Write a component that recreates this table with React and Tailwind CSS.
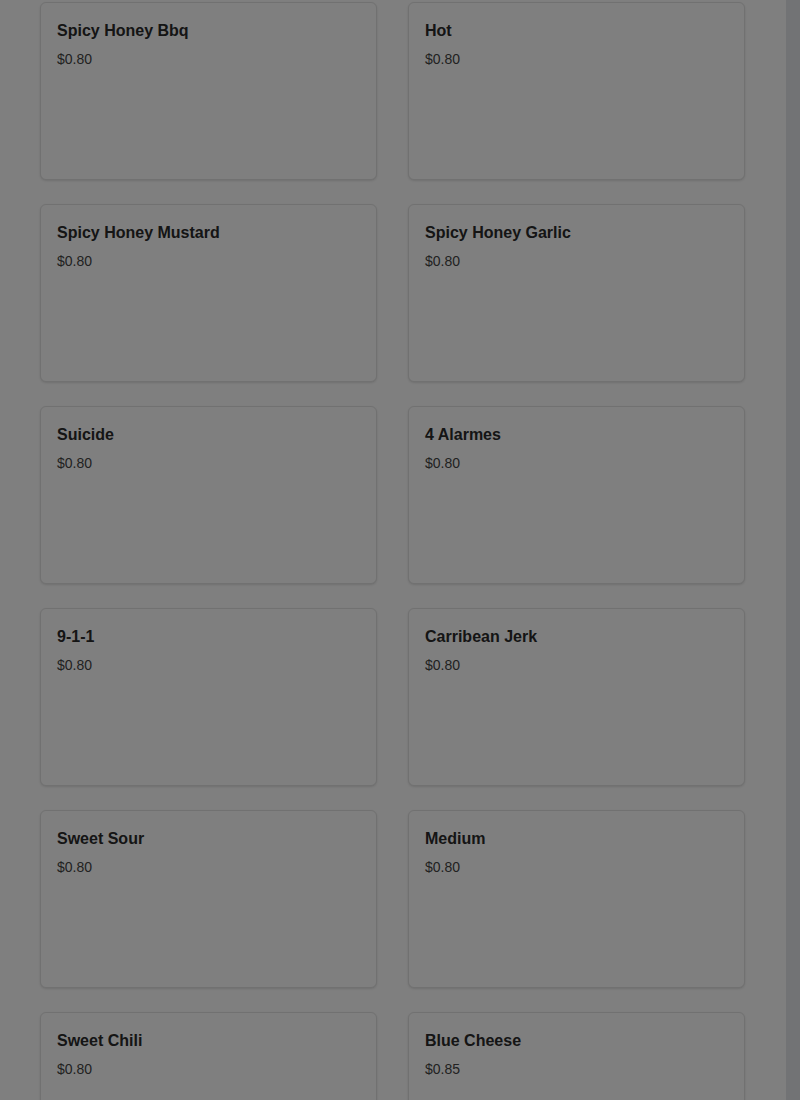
import React from 'react';

const sauces = [
  { name: 'Spicy Honey Bbq', price: '$0.80' },
  { name: 'Hot', price: '$0.80' },
  { name: 'Spicy Honey Mustard', price: '$0.80' },
  { name: 'Spicy Honey Garlic', price: '$0.80' },
  { name: 'Suicide', price: '$0.80' },
  { name: '4 Alarmes', price: '$0.80' },
  { name: '9-1-1', price: '$0.80' },
  { name: 'Carribean Jerk', price: '$0.80' },
  { name: 'Sweet Sour', price: '$0.80' },
  { name: 'Medium', price: '$0.80' },
  { name: 'Sweet Chili', price: '$0.80' },
  { name: 'Blue Cheese', price: '$0.85' },
];

const SauceCard = ({ name, price }) => (
  <div className="h-[178px] rounded-md border border-[#e2e2e2] bg-white px-4 pt-4 shadow-sm">
    <h3 className="text-base font-bold leading-6 text-[#2a2a2a]">{name}</h3>
    <p className="mt-1.5 text-sm leading-5 text-[#444]">{price}</p>
  </div>
);

const App = () => {
  return (
    <div className="relative h-[1100px] overflow-hidden bg-white font-['Liberation_Sans',Arial,sans-serif]">
      <div className="flex">
        <main className="flex-1 px-10 pt-[2px]">
          <div className="grid grid-cols-[337px_337px] gap-x-[31px] gap-y-6">
            {sauces.map((s) => (
              <SauceCard key={s.name} {...s} />
            ))}
          </div>
        </main>
        <div className="w-[14px] shrink-0 h-[1100px] bg-gray-200" />
      </div>
      {/* modal backdrop */}
      <div className="fixed inset-0 bg-black/50" />
    </div>
  );
};

export default App;
